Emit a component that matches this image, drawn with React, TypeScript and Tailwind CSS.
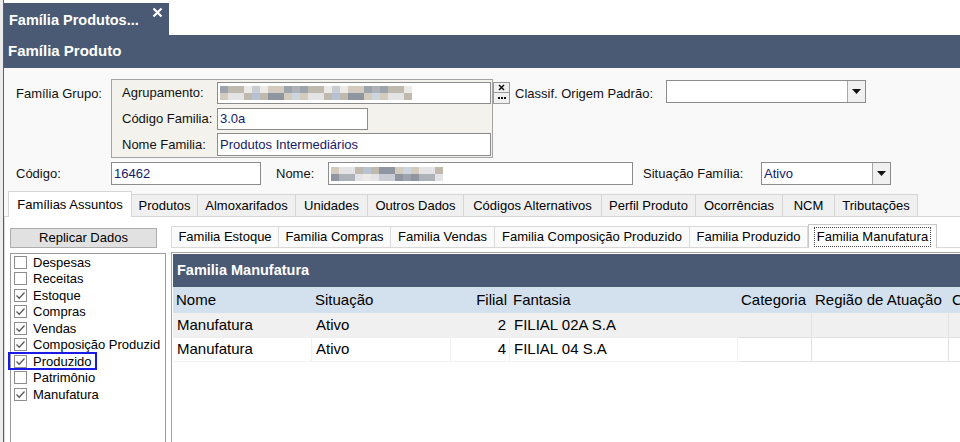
import { ReactNode } from "react";

const palette = ["#c9ccd2", "#9ea4ae", "#e4e4e6", "#b7c2d3", "#d3cbbd", "#aeb3ba", "#eceae6", "#8f96a1", "#cfd5df", "#bfb9ae"];

const Blur = ({ cols, rows, cell, seed }: { cols: number; rows: number; cell: number; seed: number }) => {
  return (
    <div className="flex flex-col">
      {Array.from({ length: rows }).map((_, r) => (
        <div key={r} className="flex">
          {Array.from({ length: cols }).map((_, c) => (
            <span
              key={c}
              style={{
                width: cell,
                height: cell - 1,
                backgroundColor: palette[(c * 7 + r * 3 + seed + ((c * c) % 5)) % palette.length],
              }}
            />
          ))}
        </div>
      ))}
    </div>
  );
};

const Input = ({ w, children, h = "h-[23px]" }: { w: string; children?: ReactNode; h?: string }) => (
  <div className={`${w} ${h} bg-white border border-[#8c8c8c] flex items-center pl-[2px] text-[13px] text-[#14206a] overflow-hidden`}>
    {children}
  </div>
);

const Arrow = () => (
  <div className="w-[18px] h-full border-l border-[#a8a8a8] bg-[#f0f0f0] flex items-center justify-center">
    <svg width="9" height="5" viewBox="0 0 9 5">
      <polygon points="0,0 9,0 4.5,5" fill="#111" />
    </svg>
  </div>
);

const Select = ({ w, value }: { w: string; value?: string }) => (
  <div className={`${w} h-[23px] bg-white border border-[#8c8c8c] flex items-stretch`}>
    <div className="flex-1 flex items-center pl-[2px] text-[13px] text-[#14206a]">{value}</div>
    <Arrow />
  </div>
);

const Check = ({ on }: { on: boolean }) => (
  <span className="w-[13px] h-[13px] border border-[#8e8e8e] bg-white flex items-center justify-center shrink-0">
    {on && (
      <svg width="11" height="11" viewBox="0 0 11 11">
        <polyline points="1.5,5.5 4.2,8.3 9.5,2.5" fill="none" stroke="#5a5a5a" strokeWidth="1.3" />
      </svg>
    )}
  </span>
);

const outerTabs = [
  { t: "Produtos", w: "w-[66px]" },
  { t: "Almoxarifados", w: "w-[98px]" },
  { t: "Unidades", w: "w-[72px]" },
  { t: "Outros Dados", w: "w-[96px]" },
  { t: "Códigos Alternativos", w: "w-[138px]" },
  { t: "Perfil Produto", w: "w-[94px]" },
  { t: "Ocorrências", w: "w-[87px]" },
  { t: "NCM", w: "w-[52px]" },
  { t: "Tributações", w: "w-[83px]" },
];

const innerTabs = [
  { t: "Familia Estoque", w: "w-[108px]" },
  { t: "Familia Compras", w: "w-[112px]" },
  { t: "Familia Vendas", w: "w-[104px]" },
  { t: "Familia Composição Produzido", w: "w-[195px]" },
  { t: "Familia Produzido", w: "w-[118px]" },
];

const items = [
  { t: "Despesas", on: false },
  { t: "Receitas", on: false },
  { t: "Estoque", on: true },
  { t: "Compras", on: true },
  { t: "Vendas", on: true },
  { t: "Composição Produzid", on: true },
  { t: "Produzido", on: true },
  { t: "Patrimônio", on: false },
  { t: "Manufatura", on: true },
];

const cols = [
  { t: "Nome", w: "w-[139px]", r: false },
  { t: "Situação", w: "w-[139px]", r: false },
  { t: "Filial", w: "w-[59px]", r: true },
  { t: "Fantasia", w: "w-[228px]", r: false },
  { t: "Categoria", w: "w-[74px]", r: false },
  { t: "Região de Atuação", w: "w-[137px]", r: false },
  { t: "Classificação", w: "w-[120px]", r: false },
];

const rows = [
  ["Manufatura", "Ativo", "2", "FILIAL 02A S.A", "", "", ""],
  ["Manufatura", "Ativo", "4", "FILIAL 04 S.A", "", "", ""],
];

export default function App() {
  return (
    <div
      className="w-[960px] h-[442px] overflow-hidden flex bg-white text-black"
      style={{ fontFamily: '"Liberation Sans", Arial, sans-serif' }}
    >
      <div className="w-[4px] shrink-0 bg-[#ececec] border-r border-[#5f5f5f]" />
      <div className="flex-1 flex flex-col min-w-0">
        {/* window tab */}
        <div className="h-[35px] shrink-0 flex items-end bg-white">
          <div className="w-[165px] h-[32px] bg-[#4a5a75] relative flex items-center pl-[5px] pt-[4px] text-white font-bold text-[14.5px]">
            Família Produtos...
            <svg className="absolute right-[6px] top-[4px]" width="11" height="11" viewBox="0 0 11 11">
              <path d="M1.5 1.5 L9.5 9.5 M9.5 1.5 L1.5 9.5" stroke="#fff" strokeWidth="2.2" />
            </svg>
          </div>
        </div>
        <div className="h-[33px] shrink-0 bg-[#4a5a75] flex items-center pl-[4px] text-white font-bold text-[15px]">
          Família Produto
        </div>

        {/* form */}
        <div className="h-[124px] shrink-0 bg-[#f9f9f9] pl-[12px] pt-[11px] text-[13px] text-[#111]">
          <div className="flex items-start">
            <div className="w-[95px] pt-[5px]">Família Grupo:</div>
            <div className="w-[382px] h-[79px] border border-[#a3a3a3] bg-[#f3f2ec] pl-[10px] pt-[2px] flex flex-col gap-[3.5px]">
              <div className="flex items-center">
                <div className="w-[95px]">Agrupamento:</div>
                <Input w="w-[274px]" h="h-[22px]">
                  <Blur cols={24} rows={2} cell={8} seed={1} />
                </Input>
              </div>
              <div className="flex items-center">
                <div className="w-[95px]">Código Familia:</div>
                <Input w="w-[151px]" h="h-[22px]">3.0a</Input>
              </div>
              <div className="flex items-center">
                <div className="w-[95px]">Nome Familia:</div>
                <Input w="w-[274px]" h="h-[23px]">Produtos Intermediários</Input>
              </div>
            </div>
            <div className="mt-[3px] w-[17px] flex flex-col">
              <div className="h-[11px] bg-[#f0f0f0] border border-[#9a9a9a] flex items-center justify-center">
                <svg width="7" height="7" viewBox="0 0 7 7">
                  <path d="M1 1 L6 6 M6 1 L1 6" stroke="#111" strokeWidth="1.5" />
                </svg>
              </div>
              <div className="h-[11px] bg-[#f0f0f0] border border-t-0 border-[#9a9a9a] flex items-center justify-center gap-[1px]">
                <span className="w-[2px] h-[2px] bg-[#111]" />
                <span className="w-[2px] h-[2px] bg-[#111]" />
                <span className="w-[2px] h-[2px] bg-[#111]" />
              </div>
            </div>
            <div className="ml-[5px] w-[151px] pt-[5px]">Classif. Origem Padrão:</div>
            <div className="mt-[1px]">
              <Select w="w-[200px]" />
            </div>
          </div>
          <div className="flex items-center mt-[4px]">
            <div className="w-[95px]">Código:</div>
            <Input w="w-[150px]">16462</Input>
            <div className="ml-[15px] w-[52px]">Nome:</div>
            <Input w="w-[305px]">
              <div className="flex flex-col">
                <Blur cols={14} rows={2} cell={8} seed={4} />
              </div>
            </Input>
            <div className="ml-[10px] w-[118px]">Situação Família:</div>
            <Select w="w-[130px]" value="Ativo" />
          </div>
        </div>

        {/* outer tabs */}
        <div className="h-[25px] shrink-0 bg-[#f9f9f9] flex items-end pl-[4px] border-b border-[#d5d5d5] text-[13px]">
          <div className="w-[124px] h-[26px] -mb-px bg-white border border-b-0 border-[#d5d5d5] flex items-center justify-center">
            Famílias Assuntos
          </div>
          {outerTabs.map((t) => (
            <div
              key={t.t}
              className={`${t.w} h-[22px] bg-[#f0f0f0] border border-l-0 border-b-0 border-[#d5d5d5] flex items-center justify-center`}
            >
              {t.t}
            </div>
          ))}
        </div>

        {/* content */}
        <div className="flex-1 flex bg-white border-l border-[#dadada] min-h-0">
          <div className="ml-[5px] w-[156px] shrink-0 flex flex-col">
            <div className="mt-[11px] w-[147px] h-[20px] bg-[#e1e1e1] border border-[#adadad] flex items-center justify-center text-[13px]">
              Replicar Dados
            </div>
            <div className="mt-[5px] flex-1 border border-b-0 border-[#9c9c9c] bg-white relative text-[13px]">
              {items.map((it) => (
                <div key={it.t} className="h-[16.5px] flex items-center pl-[3px] gap-[6px] whitespace-nowrap">
                  <Check on={it.on} />
                  <span>{it.t}</span>
                </div>
              ))}
              <div className="absolute left-[-3px] top-[98px] w-[89px] h-[18px] border-2 border-[#1a1ae6]" />
            </div>
          </div>

          <div className="flex-1 flex flex-col pl-[5px] min-w-0">
            <div className="mt-[7px] h-[24px] flex items-end border-b border-[#d9d9d9] text-[13px]">
              {innerTabs.map((t) => (
                <div
                  key={t.t}
                  className={`${t.w} h-[21px] bg-[#fafafa] border border-b-0 border-l-0 border-[#dadada] first:border-l flex items-center justify-center whitespace-nowrap`}
                >
                  {t.t}
                </div>
              ))}
              <div className="w-[129px] h-[24px] -mb-px bg-white border border-b-0 border-[#c8c8c8] flex items-center justify-center">
                <span className="border border-dotted border-[#444] px-[2px] leading-[18px] whitespace-nowrap">
                  Familia Manufatura
                </span>
              </div>
            </div>

            <div className="mt-[4px] flex-1 border-l border-t border-[#a3a3a3] pl-px pt-px flex flex-col overflow-hidden">
              <div className="h-[33px] shrink-0 bg-[#4a5a75] flex items-center pl-[4px] text-white font-bold text-[14.5px]">
                Familia Manufatura
              </div>
              <div className="flex h-[26px] shrink-0 bg-[#d3e1ef] text-[15px]">
                {cols.map((c) => (
                  <div
                    key={c.t}
                    className={`${c.w} shrink-0 flex items-center px-[3px] whitespace-nowrap ${c.r ? "justify-end" : ""}`}
                  >
                    {c.t}
                  </div>
                ))}
              </div>
              {rows.map((r, i) => (
                <div key={i} className={`flex shrink-0 text-[15px] ${i === 0 ? "h-[25px] bg-[#f0f0f0]" : "h-[24px] bg-white"}`}>
                  {r.map((v, j) => (
                    <div
                      key={j}
                      className={`${cols[j].w} shrink-0 flex items-center px-[4px] border-r border-b whitespace-nowrap ${j < 4 ? "border-[#f0f0f0]" : "border-[#e2e2e2]"} ${cols[j].r ? "justify-end pr-[3px]" : ""}`}
                    >
                      {v}
                    </div>
                  ))}
                </div>
              ))}
              <div className="flex-1 bg-white" />
            </div>
          </div>
        </div>
      </div>
    </div>
  );
}
